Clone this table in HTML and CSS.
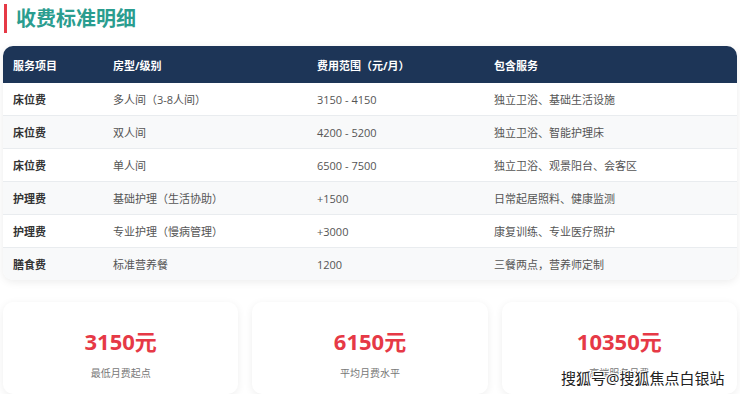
FILE: index.html
```html
<!DOCTYPE html>
<html lang="zh-CN">
<head>
  <meta charset="UTF-8">
  <meta name="viewport" content="width=device-width, initial-scale=1.0">
  <title>收费标准明细</title>
  <link rel="stylesheet" href="styles.css">
</head>
<body>
  <div class="page">
    <h2 class="section-title">收费标准明细</h2>

    <div class="table-card">
      <table class="fee-table">
        <thead>
          <tr>
            <th class="col-item">服务项目</th>
            <th class="col-type">房型/级别</th>
            <th class="col-price">费用范围（元/月）</th>
            <th>包含服务</th>
          </tr>
        </thead>
        <tbody>
          <tr>
            <td class="item">床位费</td>
            <td>多人间（3-8人间）</td>
            <td>3150 - 4150</td>
            <td>独立卫浴、基础生活设施</td>
          </tr>
          <tr>
            <td class="item">床位费</td>
            <td>双人间</td>
            <td>4200 - 5200</td>
            <td>独立卫浴、智能护理床</td>
          </tr>
          <tr>
            <td class="item">床位费</td>
            <td>单人间</td>
            <td>6500 - 7500</td>
            <td>独立卫浴、观景阳台、会客区</td>
          </tr>
          <tr>
            <td class="item">护理费</td>
            <td>基础护理（生活协助）</td>
            <td>+1500</td>
            <td>日常起居照料、健康监测</td>
          </tr>
          <tr>
            <td class="item">护理费</td>
            <td>专业护理（慢病管理）</td>
            <td>+3000</td>
            <td>康复训练、专业医疗照护</td>
          </tr>
          <tr>
            <td class="item">膳食费</td>
            <td>标准营养餐</td>
            <td>1200</td>
            <td>三餐两点，营养师定制</td>
          </tr>
        </tbody>
      </table>
    </div>

    <div class="stats">
      <div class="stat-card">
        <div class="stat-value">3150元</div>
        <div class="stat-label">最低月费起点</div>
      </div>
      <div class="stat-card">
        <div class="stat-value">6150元</div>
        <div class="stat-label">平均月费水平</div>
      </div>
      <div class="stat-card">
        <div class="stat-value">10350元</div>
        <div class="stat-label">高端服务月费</div>
      </div>
    </div>
  </div>

  <div class="watermark">搜狐号@搜狐焦点白银站</div>
</body>
</html>
```

FILE: styles.css
```css
body {
  font-family: 'Open Sans', 'Noto Sans CJK SC', sans-serif;
  margin: 0;
  padding: 0;
  background-color: #fff;
  color: #333;
}

.page {
  padding: 4px 3px 0;
}

.section-title {
  margin: 0 0 13px 1px;
  padding: 0 0 0 9px;
  border-left: 3px solid #e63946;
  font-size: 20px;
  line-height: 29px;
  font-weight: bold;
  color: #2a9d8f;
}

.table-card {
  background: #fff;
  border-radius: 10px;
  overflow: hidden;
  box-shadow: 0 2px 8px rgba(0, 0, 0, 0.08);
}

.fee-table {
  width: 100%;
  border-collapse: collapse;
  font-size: 11px;
}

.fee-table th {
  background-color: #1d3557;
  color: #fff;
  font-weight: bold;
  text-align: left;
  height: 37px;
  padding: 0 10px;
}

.fee-table td {
  height: 32px;
  padding: 0 10px;
  color: #555;
  border-top: 1px solid #e9ecef;
}

.fee-table tbody tr:first-child td {
  border-top: none;
}

.fee-table tbody tr:nth-child(even) td {
  background-color: #f8f9fa;
}

.fee-table td.item {
  font-weight: bold;
  color: #333;
}

.col-item {
  width: 80px;
}

.col-type {
  width: 184px;
}

.col-price {
  width: 157px;
}

.stats {
  display: grid;
  grid-template-columns: repeat(3, 1fr);
  gap: 14px;
  margin-top: 22px;
}

.stat-card {
  background: #fff;
  border-radius: 10px;
  box-shadow: 0 2px 8px rgba(0, 0, 0, 0.07);
  text-align: center;
  padding: 24px 10px 14px;
}

.stat-value {
  font-size: 22px;
  font-weight: bold;
  color: #e63946;
  line-height: 30px;
}

.stat-label {
  margin-top: 9px;
  font-size: 10px;
  color: #777;
}

.watermark {
  position: absolute;
  left: 561px;
  top: 367px;
  font-size: 15px;
  white-space: nowrap;
  color: #222;
  text-shadow: 1px 1px 0 #fff, -1px -1px 0 #fff, 1px -1px 0 #fff, -1px 1px 0 #fff;
}
```
